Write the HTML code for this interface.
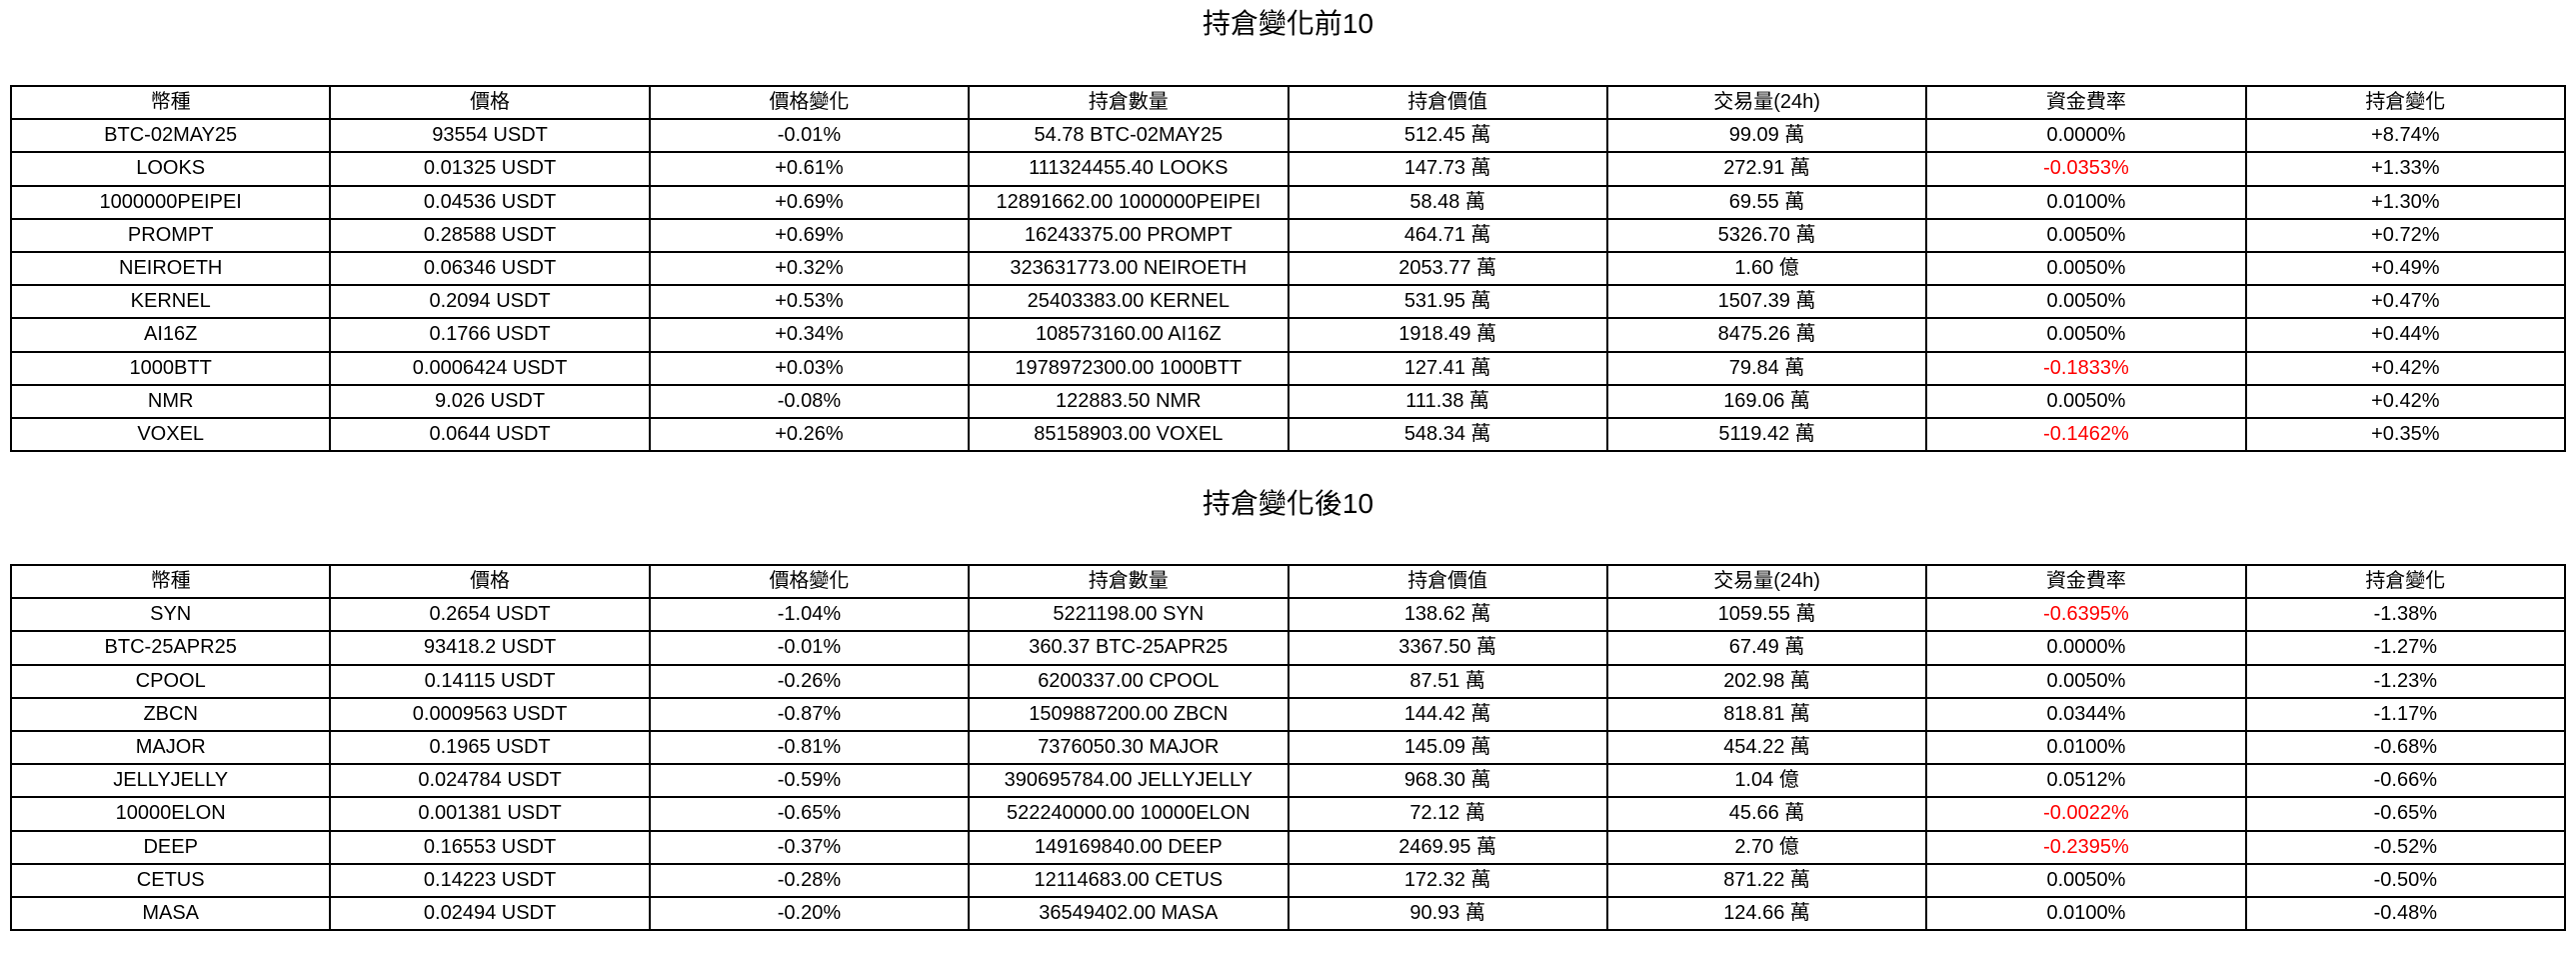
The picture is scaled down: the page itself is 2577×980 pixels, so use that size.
<!DOCTYPE html>
<html><head><meta charset="utf-8"><style>
html,body{margin:0;padding:0;background:#fff;width:2577px;height:980px;overflow:hidden}
body{font-family:"Liberation Sans","Noto Sans CJK TC",sans-serif;color:#000;position:relative}
.t{position:absolute;left:0;width:2577px;text-align:center;font-size:28px;line-height:40px}
table{position:absolute;left:10px;width:2557px;border-collapse:collapse;table-layout:fixed}
td{border:2px solid #000;height:31.2px;padding:0;text-align:center;font-size:20px;line-height:29px;white-space:nowrap}
.r{color:#f00}
</style></head><body>
<div class="t" style="top:4px">持倉變化前10</div>
<table style="top:85px">
<tr><td>幣種</td><td>價格</td><td>價格變化</td><td>持倉數量</td><td>持倉價值</td><td>交易量(24h)</td><td>資金費率</td><td>持倉變化</td></tr>
<tr><td>BTC-02MAY25</td><td>93554 USDT</td><td>-0.01%</td><td>54.78 BTC-02MAY25</td><td>512.45 萬</td><td>99.09 萬</td><td>0.0000%</td><td>+8.74%</td></tr>
<tr><td>LOOKS</td><td>0.01325 USDT</td><td>+0.61%</td><td>111324455.40 LOOKS</td><td>147.73 萬</td><td>272.91 萬</td><td class="r">-0.0353%</td><td>+1.33%</td></tr>
<tr><td>1000000PEIPEI</td><td>0.04536 USDT</td><td>+0.69%</td><td>12891662.00 1000000PEIPEI</td><td>58.48 萬</td><td>69.55 萬</td><td>0.0100%</td><td>+1.30%</td></tr>
<tr><td>PROMPT</td><td>0.28588 USDT</td><td>+0.69%</td><td>16243375.00 PROMPT</td><td>464.71 萬</td><td>5326.70 萬</td><td>0.0050%</td><td>+0.72%</td></tr>
<tr><td>NEIROETH</td><td>0.06346 USDT</td><td>+0.32%</td><td>323631773.00 NEIROETH</td><td>2053.77 萬</td><td>1.60 億</td><td>0.0050%</td><td>+0.49%</td></tr>
<tr><td>KERNEL</td><td>0.2094 USDT</td><td>+0.53%</td><td>25403383.00 KERNEL</td><td>531.95 萬</td><td>1507.39 萬</td><td>0.0050%</td><td>+0.47%</td></tr>
<tr><td>AI16Z</td><td>0.1766 USDT</td><td>+0.34%</td><td>108573160.00 AI16Z</td><td>1918.49 萬</td><td>8475.26 萬</td><td>0.0050%</td><td>+0.44%</td></tr>
<tr><td>1000BTT</td><td>0.0006424 USDT</td><td>+0.03%</td><td>1978972300.00 1000BTT</td><td>127.41 萬</td><td>79.84 萬</td><td class="r">-0.1833%</td><td>+0.42%</td></tr>
<tr><td>NMR</td><td>9.026 USDT</td><td>-0.08%</td><td>122883.50 NMR</td><td>111.38 萬</td><td>169.06 萬</td><td>0.0050%</td><td>+0.42%</td></tr>
<tr><td>VOXEL</td><td>0.0644 USDT</td><td>+0.26%</td><td>85158903.00 VOXEL</td><td>548.34 萬</td><td>5119.42 萬</td><td class="r">-0.1462%</td><td>+0.35%</td></tr>
</table>
<div class="t" style="top:484px">持倉變化後10</div>
<table style="top:564px">
<tr><td>幣種</td><td>價格</td><td>價格變化</td><td>持倉數量</td><td>持倉價值</td><td>交易量(24h)</td><td>資金費率</td><td>持倉變化</td></tr>
<tr><td>SYN</td><td>0.2654 USDT</td><td>-1.04%</td><td>5221198.00 SYN</td><td>138.62 萬</td><td>1059.55 萬</td><td class="r">-0.6395%</td><td>-1.38%</td></tr>
<tr><td>BTC-25APR25</td><td>93418.2 USDT</td><td>-0.01%</td><td>360.37 BTC-25APR25</td><td>3367.50 萬</td><td>67.49 萬</td><td>0.0000%</td><td>-1.27%</td></tr>
<tr><td>CPOOL</td><td>0.14115 USDT</td><td>-0.26%</td><td>6200337.00 CPOOL</td><td>87.51 萬</td><td>202.98 萬</td><td>0.0050%</td><td>-1.23%</td></tr>
<tr><td>ZBCN</td><td>0.0009563 USDT</td><td>-0.87%</td><td>1509887200.00 ZBCN</td><td>144.42 萬</td><td>818.81 萬</td><td>0.0344%</td><td>-1.17%</td></tr>
<tr><td>MAJOR</td><td>0.1965 USDT</td><td>-0.81%</td><td>7376050.30 MAJOR</td><td>145.09 萬</td><td>454.22 萬</td><td>0.0100%</td><td>-0.68%</td></tr>
<tr><td>JELLYJELLY</td><td>0.024784 USDT</td><td>-0.59%</td><td>390695784.00 JELLYJELLY</td><td>968.30 萬</td><td>1.04 億</td><td>0.0512%</td><td>-0.66%</td></tr>
<tr><td>10000ELON</td><td>0.001381 USDT</td><td>-0.65%</td><td>522240000.00 10000ELON</td><td>72.12 萬</td><td>45.66 萬</td><td class="r">-0.0022%</td><td>-0.65%</td></tr>
<tr><td>DEEP</td><td>0.16553 USDT</td><td>-0.37%</td><td>149169840.00 DEEP</td><td>2469.95 萬</td><td>2.70 億</td><td class="r">-0.2395%</td><td>-0.52%</td></tr>
<tr><td>CETUS</td><td>0.14223 USDT</td><td>-0.28%</td><td>12114683.00 CETUS</td><td>172.32 萬</td><td>871.22 萬</td><td>0.0050%</td><td>-0.50%</td></tr>
<tr><td>MASA</td><td>0.02494 USDT</td><td>-0.20%</td><td>36549402.00 MASA</td><td>90.93 萬</td><td>124.66 萬</td><td>0.0100%</td><td>-0.48%</td></tr>
</table>
</body></html>
